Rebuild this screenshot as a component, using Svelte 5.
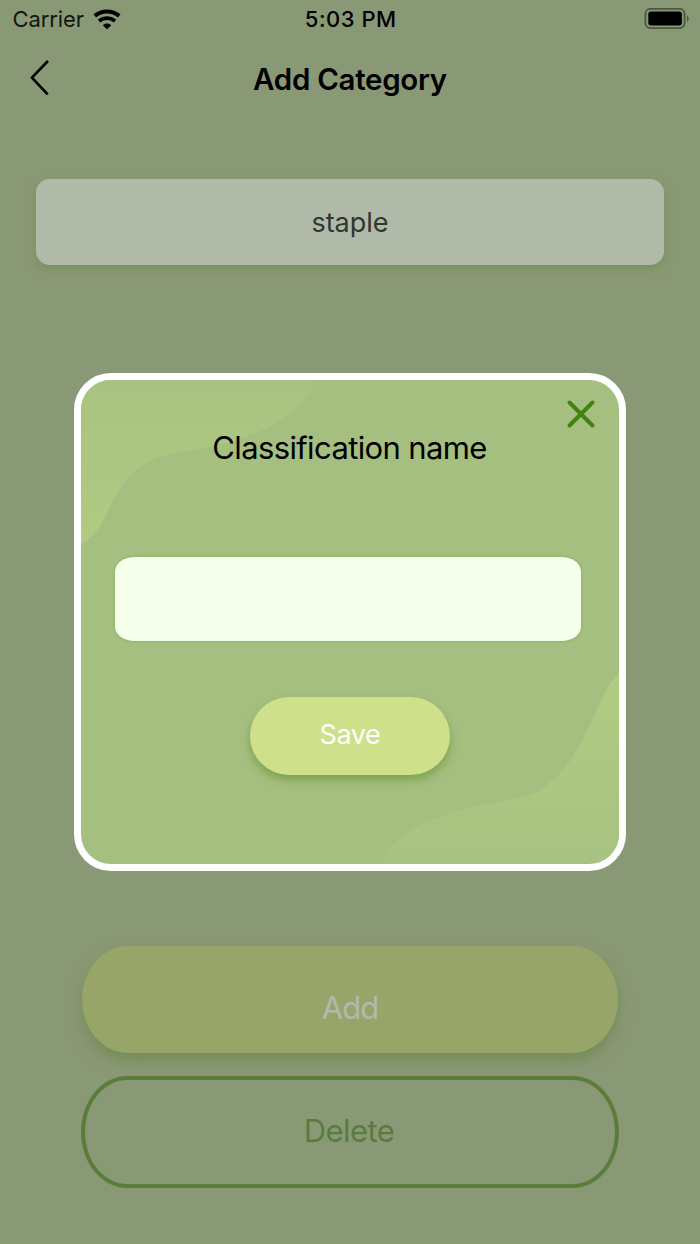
<script>
  let category = $state('staple');
  let name = $state('');
</script>

<div class="screen">
  <header class="status">
    <div class="carrier">
      <span class="carrier-name">Carrier</span>
      <svg class="wifi" width="28" height="21" viewBox="0 0 28 21">
        <path d="M1.8 6.8 C8.8 1 19.2 1 26.2 6.8" fill="none" stroke="#000" stroke-width="4.1" />
        <path d="M6 11.9 C10.8 8.1 17.2 8.1 22 11.9" fill="none" stroke="#000" stroke-width="3.8" />
        <path d="M9.8 16.2 C12.2 13.8 15.8 13.8 18.2 16.2 L14 20.2Z" fill="#000" />
      </svg>
    </div>
    <span class="time">5:03 PM</span>
    <svg class="battery" width="46" height="22" viewBox="0 0 46 22">
      <rect x="1.4" y="0.9" width="39.2" height="19.2" rx="5" fill="none" stroke="#4c5941" stroke-width="1.9" />
      <rect x="4.3" y="3.6" width="33.6" height="13.8" rx="2.6" fill="#000" />
      <path d="M43 7.2 C45.2 8.3 45.2 13 43 14.1Z" fill="#4c5941" />
    </svg>
  </header>

  <nav class="bar">
    <svg width="20" height="36" viewBox="0 0 20 36">
      <path d="M17.2 1.8 L1.9 17.6 L17 33.6" fill="none" stroke="#000" stroke-width="2.7" stroke-linecap="round" stroke-linejoin="round" />
    </svg>
    <h1>Add Category</h1>
  </nav>

  <main>
    <div class="field"><span class="t-staple">{category}</span></div>
    <div class="actions">
      <div class="add"><span class="t-add">Add</span></div>
      <div class="delete"><span class="t-delete">Delete</span></div>
    </div>
  </main>

  <div class="overlay">
    <section class="dialog">
      <svg class="waves" viewBox="0 0 538 483" width="538" height="483">
        <defs>
          <linearGradient id="wa" x1="0" y1="0" x2="0" y2="1">
            <stop offset="0" stop-color="#a8c281" />
            <stop offset="1" stop-color="#b1cb83" />
          </linearGradient>
          <linearGradient id="wb" x1="0" y1="0" x2="0" y2="1">
            <stop offset="0" stop-color="#b1cb83" />
            <stop offset="1" stop-color="#a8c381" />
          </linearGradient>
        </defs>
        <path fill="url(#wa)" d="M0 0 H234 C223 31 195 49 144 63 C122 69 103 70 84 75 C58 82 43 99 31 122 C22 141 15 157 0 164Z" />
        <path fill="url(#wb)" d="M538 293 C516 315 516 344 486 385 C475 399 460 412 446 416 C428 420 407 423 386 429 C343 440 315 452 300 483 H538Z" />
      </svg>
      <svg class="close" width="30" height="30" viewBox="0 0 30 30">
        <path d="M3.5 3.5 L26.5 26.5 M26.5 3.5 L3.5 26.5" stroke="#408410" stroke-width="4" stroke-linecap="round" />
      </svg>
      <h2>Classification name</h2>
      <input type="text" bind:value={name} />
      <div class="save"><span class="t-save">Save</span></div>
    </section>
  </div>
</div>

<style>
  :global(body) { margin: 0; }
  .screen {
    position: relative;
    width: 700px;
    height: 1244px;
    box-sizing: border-box;
    overflow: hidden;
    background: #8a9975;
    font-family: Inter, "Liberation Sans", sans-serif;
    color: #000;
    display: flex;
    flex-direction: column;
  }
  span, h1, h2 { white-space: nowrap; }
  .status {
    height: 40px;
    display: grid;
    grid-template-columns: 1fr auto 1fr;
    align-items: center;
    padding: 0 10px 0 12.5px;
    line-height: 38px;
  }
  .carrier { display: flex; align-items: center; gap: 9.5px; }
  .carrier-name { font-size: 22px; color: #12160f; letter-spacing: -0.1px; margin-top: -2px; }
  .wifi { margin-top: -2px; }
  .time { font-size: 22px; font-weight: 500; letter-spacing: 0.5px; margin: -2px 1px 0 0; }
  .battery { justify-self: end; margin-bottom: 3px; }
  .bar {
    height: 78px;
    display: grid;
    grid-template-columns: 1fr auto 1fr;
    align-items: center;
    padding: 0 30px;
  }
  .bar svg { margin-bottom: 2px; }
  h1 { margin: 0; font-size: 29.5px; font-weight: 600; line-height: 40px; letter-spacing: -0.3px; }
  main {
    flex: 1;
    padding: 61px 36px 56px;
    display: flex;
    flex-direction: column;
    justify-content: space-between;
  }
  .field {
    height: 86px;
    border-radius: 14px;
    background: #b1baa9;
    box-shadow: 0 4px 8px rgba(104, 140, 70, 0.5);
    display: flex;
    align-items: center;
    justify-content: center;
  }
  .t-staple { font-size: 27px; color: #303630; padding-top: 1px; }
  .actions { display: flex; flex-direction: column; gap: 23px; padding: 0 45px; }
  .add, .delete {
    display: flex;
    align-items: center;
    justify-content: center;
    box-sizing: border-box;
  }
  .add {
    height: 107px;
    margin: 0 1px;
    border-radius: 46px / 53.5px;
    background: #98a568;
    box-shadow: 0 7px 14px rgba(95, 125, 60, 0.5);
  }
  .t-add { font-size: 31px; color: #b4b9b0; padding-top: 15px; letter-spacing: -1px; }
  .delete { height: 112px; border: 4.5px solid #5a7e3a; border-radius: 46px / 56px; }
  .t-delete { font-size: 31px; color: #5a7b3f; letter-spacing: -0.6px; padding-bottom: 3px; margin-left: -2px; }
  .overlay {
    position: absolute;
    inset: 0;
    display: flex;
    align-items: center;
    justify-content: center;
  }
  .dialog {
    position: relative;
    width: 552px;
    height: 498px;
    box-sizing: border-box;
    border: 7px solid #fff;
    border-radius: 37px;
    background: #a4bf80;
    overflow: hidden;
    display: flex;
    flex-direction: column;
    align-items: center;
  }
  .waves { position: absolute; left: 0; top: 0; }
  .close { position: absolute; right: 23px; top: 19px; }
  h2 { position: relative; margin: 48px 1px 0 0; font-size: 31px; font-weight: 400; line-height: 40px; letter-spacing: -0.63px; }
  input {
    position: relative;
    width: 466.5px;
    height: 84px;
    box-sizing: border-box;
    margin: 88.5px 4px 0 0;
    border: 0;
    border-radius: 20px / 14px;
    background: #f5ffeb;
    box-shadow: 0 0 3px rgba(110, 155, 55, 0.6);
    padding: 0 20px;
    font: 28px Inter, sans-serif;
  }
  .save {
    position: relative;
    width: 200px;
    height: 78px;
    margin-top: 56px;
    border-radius: 39px;
    background: #cee089;
    box-shadow: 0 5px 8px rgba(110, 150, 60, 0.7);
    display: flex;
    align-items: center;
    justify-content: center;
  }
  .t-save { font-size: 27px; color: #fff; letter-spacing: -0.4px; padding-bottom: 2px; }
</style>
